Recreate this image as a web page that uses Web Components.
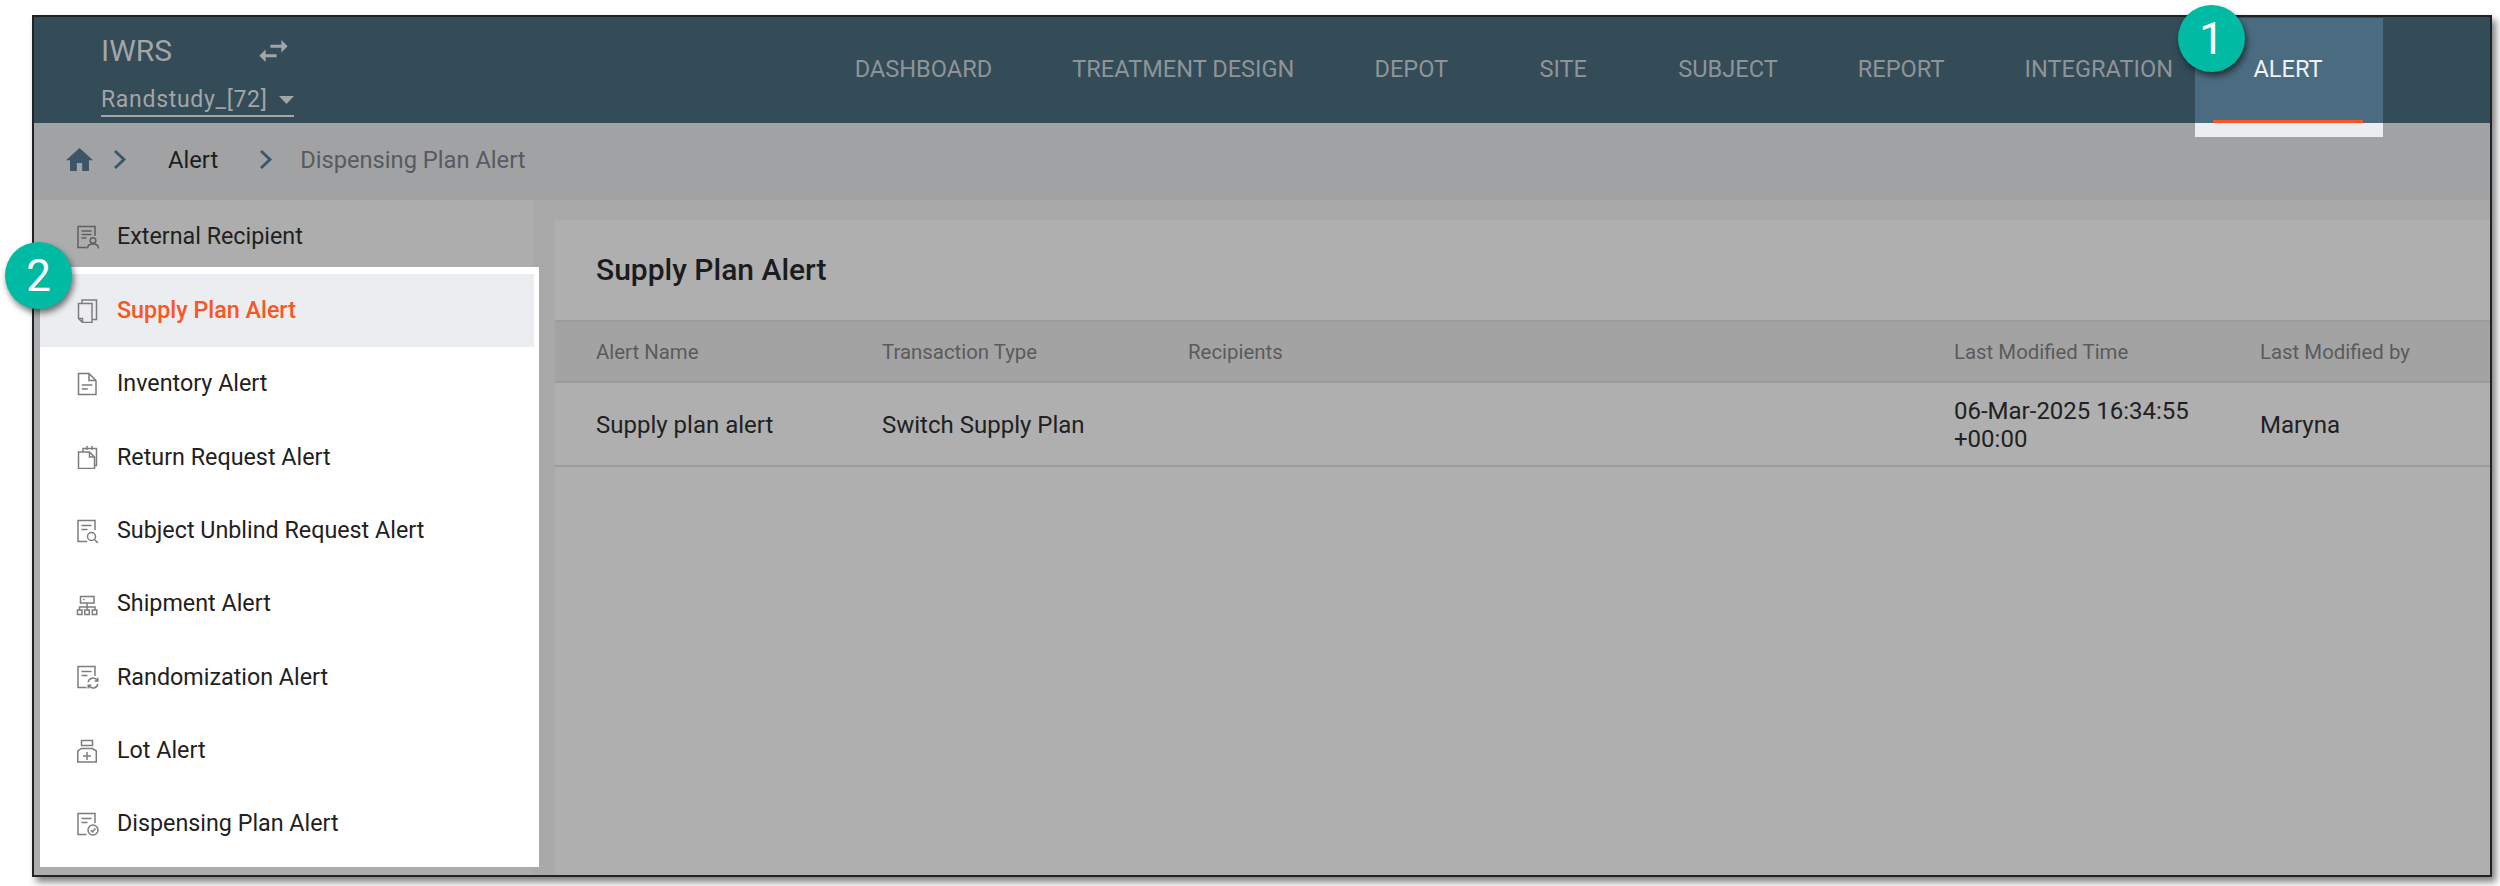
<!DOCTYPE html>
<html lang="en">
<head>
<meta charset="utf-8">
<title>Supply Plan Alert</title>
<style>
  html, body { margin: 0; padding: 0; background: #fff; }
  body { width: 2500px; height: 886px; overflow: hidden; font-family: Roboto, "Liberation Sans", sans-serif; }
</style>
</head>
<body>
<app-frame>
  <top-bar slot="top" study="Randstudy_[72]">
    <nav-tab>DASHBOARD</nav-tab>
    <nav-tab>TREATMENT DESIGN</nav-tab>
    <nav-tab>DEPOT</nav-tab>
    <nav-tab>SITE</nav-tab>
    <nav-tab>SUBJECT</nav-tab>
    <nav-tab>REPORT</nav-tab>
    <nav-tab>INTEGRATION</nav-tab>
    <nav-tab active>ALERT</nav-tab>
  </top-bar>
  <bread-crumb slot="crumb" parent="Alert" current="Dispensing Plan Alert"></bread-crumb>
  <side-nav slot="side">
    <side-item slot="first" icon="recipient">External Recipient</side-item>
    <side-item icon="copies" selected>Supply Plan Alert</side-item>
    <side-item icon="doc">Inventory Alert</side-item>
    <side-item icon="returns">Return Request Alert</side-item>
    <side-item icon="search">Subject Unblind Request Alert</side-item>
    <side-item icon="tree">Shipment Alert</side-item>
    <side-item icon="cycle">Randomization Alert</side-item>
    <side-item icon="bottle">Lot Alert</side-item>
    <side-item icon="check">Dispensing Plan Alert</side-item>
  </side-nav>
  <alert-panel slot="main" heading="Supply Plan Alert"></alert-panel>
  <step-badge slot="over" n="1" style="left:2178px;top:5px"></step-badge>
  <step-badge slot="over" n="2" style="left:5px;top:242px"></step-badge>
</app-frame>

<script>
const define = (name, css, html) => {
  customElements.define(name, class extends HTMLElement {
    constructor() {
      super();
      this.attachShadow({ mode: 'open' });
    }
    connectedCallback() {
      const body = typeof html === 'function' ? html(this) : html;
      this.shadowRoot.innerHTML = `<style>${css}</style>${body}`;
    }
  });
};

define('app-frame', `
  :host { display: block; width: 2500px; height: 886px; padding: 15px 0 0 32px; box-sizing: border-box; }
  .frame { width: 2460px; height: 862px; box-sizing: border-box; border: 2px solid #1f2326;
    box-shadow: 4px 5px 7px rgba(0,0,0,.5); display: flex; flex-direction: column; background: #adadad; }
  .body { flex: 1; min-height: 0; display: flex; }
`, `
  <div class="frame">
    <slot name="top"></slot>
    <slot name="crumb"></slot>
    <div class="body"><slot name="side"></slot><slot name="main"></slot></div>
  </div>
  <slot name="over"></slot>
`);

define('top-bar', `
  :host { display: flex; height: 106px; background: #344b58; padding: 0 127px 0 67px; box-sizing: border-box;
    position: relative; z-index: 2; }
  .left { display: flex; flex-direction: column; padding-top: 17px; }
  .app { display: flex; align-items: center; height: 34px; }
  .app span { width: 158px; font-size: 30px; line-height: 34px; color: #a3a5a6; }
  .study { margin-top: 18px; width: 193px; height: 31px; box-sizing: border-box; display: flex; align-items: center;
    justify-content: space-between; border-bottom: 2px solid #a3a5a6; padding-bottom: 2px; font-size: 23px;
    line-height: 28px; color: #a3a5a6; letter-spacing: .7px; }
  nav { margin-left: auto; display: flex; }
`, el => `
  <div class="left">
    <div class="app"><span>IWRS</span>
      <svg width="29" height="22" viewBox="3 5 18 14" fill="#a3a5a6"><path d="M6.99 11L3 15l3.99 4v-3H14v-2H6.99v-3zM21 9l-3.99-4v3H10v2h7.01v3L21 9z"/></svg>
    </div>
    <div class="study">${el.getAttribute('study')}
      <svg width="15" height="8" viewBox="0 0 15 8" fill="#a3a5a6"><path d="M0 0h15L7.5 8z"/></svg>
    </div>
  </div>
  <nav><slot></slot></nav>
`);

define('nav-tab', `
  :host { display: flex; align-items: center; justify-content: center; min-width: 150px; padding: 0 40px;
    box-sizing: border-box; height: 106px; font-size: 23.6px; color: #8e9497; white-space: nowrap; position: relative; }
  :host([active]) { color: #f1f2f3; z-index: 1; }
  :host([active])::before { content: ""; position: absolute; z-index: -1; left: -18px; right: -20px; top: 1px; bottom: -14px;
    background: linear-gradient(#4b6c80 0 105px, #ecedf1 105px); }
  :host([active])::after { content: ""; position: absolute; left: 0; right: 0; bottom: 0; height: 3px; background: #fb5522; }
  span { position: relative; top: -1px; }
`, `<span><slot></slot></span>`);

define('bread-crumb', `
  :host { display: flex; align-items: center; height: 77px; background: #a1a2a4; font-size: 23.7px; padding: 0 0 4px 32px; box-sizing: border-box; }
  .home { margin-right: 20px; }
  .c { color: #3b5666; }
  .p { color: #1b1d1f; margin: 0 41px 0 41px; }
  .cur { color: #565b5f; margin-left: 27px; }
`, el => `
  <svg class="home" width="27" height="23" viewBox="2 3 20 17" fill="#3b5666"><path d="M10 20v-6h4v6h5v-8h3L12 3 2 12h3v8z"/></svg>
  <svg class="c" width="14" height="19" viewBox="0 0 14 19" fill="none" stroke="currentColor" stroke-width="2.8"><path d="M2 1l9 8.5-9 8.5"/></svg>
  <span class="p">${el.getAttribute('parent')}</span>
  <svg class="c" width="14" height="19" viewBox="0 0 14 19" fill="none" stroke="currentColor" stroke-width="2.8"><path d="M2 1l9 8.5-9 8.5"/></svg>
  <span class="cur">${el.getAttribute('current')}</span>
`);

define('side-nav', `
  :host { display: flex; flex-direction: column; flex: none; width: 519px; height: 100%; padding: 0 0 0 6px; box-sizing: border-box;
    background: linear-gradient(90deg, #adadad 499px, #a9a9a9 499px); }
  .first { display: block; height: 67px; box-sizing: border-box; }
  .lit { width: 499px; height: 600px; box-sizing: border-box; padding: 7px 5px 0 0; background: #fff;
    display: flex; flex-direction: column; }
`, `
  <div class="first"><slot name="first"></slot></div>
  <div class="lit"><slot></slot></div>
`);

const ICONS = {
  recipient: `<path d="M10.500 22.500H2V1.500h17V11M5.500 6h10M5.500 9.500h10M5.500 13h5"/><circle cx="17" cy="15.500" r="2.800"/><path d="M11.500 23.500c0-3 2-4.600 5.500-4.600s5.500 1.600 5.500 4.600"/>`,
  copies: `<path d="M2.500 4.500h13.500v19H6.500l-4-4zM6.500 23.500v-4h-4M6 4.500v-3.500h14.500v19.500H16"/>`,
  doc: `<path d="M2.500 1.500h10.500l7 7v14h-17.500zM13 1.500v7h7M5.800 13h10.500M5.800 17h6"/>`,
  returns: `<path d="M2.500 7h11l5 5v11.500h-16zM13.500 7v5h5M7 7V3.500h13.500V20.500h-2M11 1v4M16 1v4"/>`,
  search: `<path d="M11 22.500H2V1.500h17V11M5.500 6.500h10M5.500 10.500h6"/><circle cx="15.500" cy="17.500" r="4"/><path d="M18.500 20.500l3.500 3.500"/>`,
  tree: `<path d="M4.500 4.500h13.500v6.500H4.500zM7 7.500h1.500M11 11v4M3.500 18v-3h15.500v3M11 15v3M1.500 18h4.500v4.500H1.500zM8.800 18h4.500v4.500H8.800zM16.300 18h4.500v4.500h-4.500z"/>`,
  cycle: `<path d="M10.500 22.500H2V1.500h17V11M5.500 6.500h10M5.500 10.500h6M21.300 15.500A5 5 0 0 0 12.100 17.200M12.700 20.500A5 5 0 0 0 21.900 19M21.800 12.800v3.200h-3.200M12.200 23.400v-3.200h3.200"/>`,
  bottle: `<path d="M5.500 1.500h11v5h-11zM5.500 9.500h11l3.800 2.500v11h-18.500V12zM11 13v8M7 17h8"/>`,
  check: `<path d="M10.500 22.500H2V1.500h17V11M5.500 6.500h10M5.500 10.500h6"/><circle cx="17" cy="18" r="5"/><path d="M14.700 18l1.800 1.800 3-3.400"/>`
};

define('side-item', `
  :host { display: flex; align-items: center; height: 73.33px; flex: none; padding-left: 36px; box-sizing: border-box;
    font-size: 23.3px; color: #1f2122; white-space: nowrap; }
  :host([selected]) { background: #ecedf1; color: #fb5522; font-weight: 500; }
  svg { flex: none; margin-right: 17px; fill: none; stroke: #7d7d7d; stroke-width: 1.500; }
  :host([slot=first]) svg { stroke: #5f5f5f; }
  span { padding-bottom: 1px; }
`, el => `<svg width="24" height="24" viewBox="0 0 24 24">${ICONS[el.getAttribute('icon')]}</svg><span><slot></slot></span>`);

define('alert-panel', `
  :host { display: block; flex: 1; min-width: 0; padding: 20px 0 0 2px; background: #a9a9a9; box-sizing: border-box; }
  .panel { height: 100%; background: #afafaf; }
  h2 { margin: 0; height: 102px; box-sizing: border-box; border-bottom: 2px solid #9c9c9c; padding: 0 0 1px 41px;
    display: flex; align-items: center; font-size: 30px; font-weight: 500; color: #1b1c1d; }
  .row { display: grid; grid-template-columns: 286px 306px 766px 306px 1fr; padding-left: 41px; align-items: center; box-sizing: border-box; }
  .head { height: 61px; background: #a3a3a3; border-bottom: 2px solid #9c9c9c; color: #5a5b5c; font-size: 20.4px; }
  .data { height: 84px; padding-top: 3px; border-bottom: 2px solid #9c9c9c; color: #202122; font-size: 24px; line-height: 27.5px; }
  .wrap { padding-right: 40px; }
`, el => `
  <div class="panel">
    <h2>${el.getAttribute('heading')}</h2>
    <div class="row head"><span>Alert Name</span><span>Transaction Type</span><span>Recipients</span><span>Last Modified Time</span><span>Last Modified by</span></div>
    <div class="row data"><span>Supply plan alert</span><span>Switch Supply Plan</span><span></span><span class="wrap">06-Mar-2025 16:34:55 +00:00</span><span>Maryna</span></div>
  </div>
`);

define('step-badge', `
  :host { position: absolute; display: flex; align-items: center; justify-content: center; width: 67px; height: 67px; border-radius: 50%;
    background: #00baa3; color: #fff; font-size: 44px; box-shadow: 2px 4px 6px rgba(0,0,0,.55); z-index: 5; }
`, el => `${el.getAttribute('n')}`);
</script>
</body>
</html>
